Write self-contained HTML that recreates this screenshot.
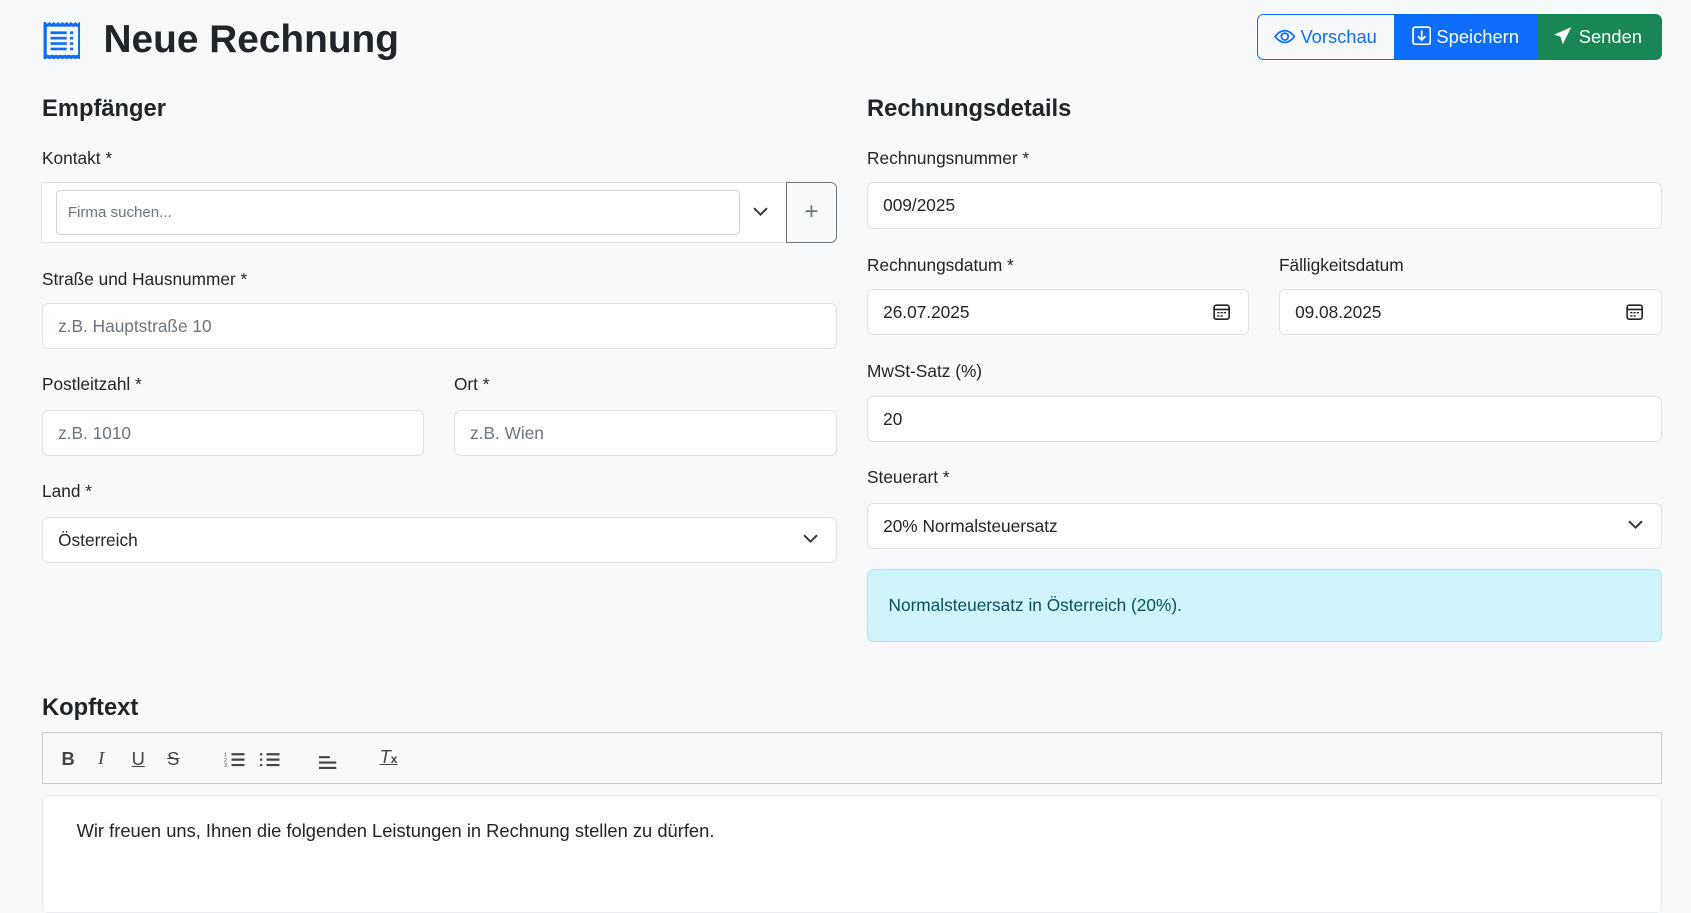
<!DOCTYPE html>
<html><head><meta charset="utf-8"><style>
*{box-sizing:border-box;margin:0;padding:0}
html,body{width:1691px;height:832px;overflow:hidden;background:#f8f9fa}
#w{position:absolute;left:0;top:0;width:1568px;height:772px;zoom:1.0784;font-family:"Liberation Sans",sans-serif;color:#212529;font-size:16px}
.a{position:absolute}
.lbl{position:absolute;font-size:16px;line-height:20px}
.inp{position:absolute;height:43px;background:#fff;border:1px solid #dee2e6;border-radius:6px;padding:0 14px;line-height:41px;font-size:16px}
.ph{color:#6c757d}
h2{position:absolute;font-size:22px;line-height:26px;font-weight:600}
.chev{position:absolute;right:16px;top:14px}
</style></head><body><div id="w">
<svg class="a" style="left:40px;top:20px" width="34" height="35" viewBox="0 0 34 35"><path d="M2 2 q2 2 4 0 q2 2 4 0 q2 2 4 0 q2 2 4 0 q2 2 4 0 q2 2 4 0 q2 2 4 0 q2 2 4 0 V33 q-2-2-4 0 q-2-2-4 0 q-2-2-4 0 q-2-2-4 0 q-2-2-4 0 q-2-2-4 0 q-2-2-4 0 q-2-2-4 0 Z" fill="none" stroke="#0d6efd" stroke-width="3"/><path d="M7 10h15M7 15h15M7 20h15M7 25h15M25 10h3M25 15h3M25 20h3M25 25h3" stroke="#0d6efd" stroke-width="2.5"/></svg>
<div class="a" style="left:96px;top:14px;font-size:36px;font-weight:600;line-height:46px">Neue Rechnung</div>
<div class="a" style="left:1166px;top:13px;width:128px;height:43px;border:1px solid #0d6efd;border-radius:6px 0 0 6px;color:#0d6efd;line-height:41px;padding-left:14px;font-size:17px"><svg width="20" height="14" viewBox="0 0 20 14" style="vertical-align:-1px;margin-right:5px"><path d="M1 7 Q10 -4 19 7 Q10 18 1 7Z" fill="none" stroke="#0d6efd" stroke-width="1.6"/><circle cx="10" cy="7" r="3.2" fill="none" stroke="#0d6efd" stroke-width="1.6"/></svg>Vorschau</div>
<div class="a" style="left:1294px;top:13px;width:132px;height:43px;background:#0d6efd;color:#fff;line-height:43px;padding-left:15px;font-size:17px"><svg width="18" height="18" viewBox="0 0 18 18" style="vertical-align:-2px;margin-right:5px"><rect x="1" y="1" width="16" height="16" rx="2" fill="none" stroke="#fff" stroke-width="1.6"/><path d="M9 4v9M5.5 9.5 9 13l3.5-3.5" fill="none" stroke="#fff" stroke-width="1.6"/></svg>Speichern</div>
<div class="a" style="left:1426px;top:13px;width:115px;height:43px;background:#198754;color:#fff;line-height:43px;padding-left:14px;font-size:17px;border-radius:0 6px 6px 0"><svg width="18" height="18" viewBox="0 0 18 18" style="vertical-align:-2px;margin-right:6px"><path d="M17 1 1 8l6 2 2 7z" fill="#fff"/></svg>Senden</div>

<h2 style="left:39px;top:88px">Empfänger</h2>
<div class="lbl" style="left:39px;top:137px">Kontakt *</div>
<div class="a" style="left:38px;top:169px;width:692px;height:56px;background:#fff;border:1px solid #dee2e6;border-right:none"></div>
<div class="inp" style="left:52px;top:176px;width:634px;height:42px;font-size:14px;line-height:40px;padding-left:10px;border-color:#ced4da;border-radius:4px"><span class="ph">Firma suchen...</span></div>
<svg class="a" style="left:698px;top:191px" width="14" height="10"><path d="M1 2l6 6 6-6" fill="none" stroke="#333" stroke-width="1.8"/></svg>
<div class="a" style="left:729px;top:169px;width:47px;height:56px;border:1px solid #6c757d;border-radius:0 6px 6px 0;background:#f8f9fa;text-align:center;line-height:54px;color:#6c757d;font-size:22px">+</div>

<div class="lbl" style="left:39px;top:249px">Straße und Hausnummer *</div>
<div class="inp" style="left:39px;top:281px;width:737px"><span class="ph">z.B. Hauptstraße 10</span></div>
<div class="lbl" style="left:39px;top:347px">Postleitzahl *</div>
<div class="lbl" style="left:421px;top:347px">Ort *</div>
<div class="inp" style="left:39px;top:380px;width:354px"><span class="ph">z.B. 1010</span></div>
<div class="inp" style="left:421px;top:380px;width:355px"><span class="ph">z.B. Wien</span></div>
<div class="lbl" style="left:39px;top:446px">Land *</div>
<div class="inp" style="left:39px;top:479px;width:737px">Österreich<svg class="chev" width="14" height="10"><path d="M1 2l6 6 6-6" fill="none" stroke="#333" stroke-width="1.8"/></svg></div>

<h2 style="left:804px;top:88px">Rechnungsdetails</h2>
<div class="lbl" style="left:804px;top:137px">Rechnungsnummer *</div>
<div class="inp" style="left:804px;top:169px;width:737px">009/2025</div>
<div class="lbl" style="left:804px;top:236px">Rechnungsdatum *</div>
<div class="lbl" style="left:1186px;top:236px">Fälligkeitsdatum</div>
<div class="inp" style="left:804px;top:268px;width:354px">26.07.2025<svg class="chev" style="top:12px" width="16" height="16"><rect x="1" y="2" width="14" height="13" rx="2" fill="none" stroke="#222" stroke-width="1.5"/><path d="M1 6h14" stroke="#222" stroke-width="1.5"/><path d="M4 9h2M7 9h2M10 9h2M4 12h2M7 12h2" stroke="#222" stroke-width="1.3"/></svg></div>
<div class="inp" style="left:1186px;top:268px;width:355px">09.08.2025<svg class="chev" style="top:12px" width="16" height="16"><rect x="1" y="2" width="14" height="13" rx="2" fill="none" stroke="#222" stroke-width="1.5"/><path d="M1 6h14" stroke="#222" stroke-width="1.5"/><path d="M4 9h2M7 9h2M10 9h2M4 12h2M7 12h2" stroke="#222" stroke-width="1.3"/></svg></div>
<div class="lbl" style="left:804px;top:335px">MwSt-Satz (%)</div>
<div class="inp" style="left:804px;top:367px;width:737px">20</div>
<div class="lbl" style="left:804px;top:433px">Steuerart *</div>
<div class="inp" style="left:804px;top:466px;width:737px">20% Normalsteuersatz<svg class="chev" width="14" height="10"><path d="M1 2l6 6 6-6" fill="none" stroke="#333" stroke-width="1.8"/></svg></div>
<div class="a" style="left:804px;top:528px;width:737px;height:67px;background:#cff4fc;border:1px solid #9eeaf9;border-radius:6px;color:#055160;padding-left:19px;line-height:65px">Normalsteuersatz in Österreich (20%).</div>

<h2 style="left:39px;top:644px">Kopftext</h2>
<div class="a" style="left:39px;top:679px;width:1502px;height:48px;border:1px solid #ccc;background:#f8f9fa"></div>
<div class="a" style="left:57px;top:694px;font-size:17px;font-weight:bold;color:#444">B</div>
<div class="a" style="left:91px;top:694px;font-size:17px;font-style:italic;color:#444;font-family:'Liberation Serif',serif">I</div>
<div class="a" style="left:122px;top:694px;font-size:17px;text-decoration:underline;color:#444">U</div>
<div class="a" style="left:155px;top:694px;font-size:17px;text-decoration:line-through;color:#444">S</div>
<svg class="a" style="left:208px;top:696px" width="20" height="16"><path d="M7 3h12M7 8h12M7 13h12" stroke="#444" stroke-width="2"/><text x="0" y="5" font-size="5" fill="#444">1</text><text x="0" y="10" font-size="5" fill="#444">2</text><text x="0" y="15" font-size="5" fill="#444">3</text></svg>
<svg class="a" style="left:240px;top:696px" width="20" height="16"><path d="M7 3h12M7 8h12M7 13h12M1 3h2M1 8h2M1 13h2" stroke="#444" stroke-width="2"/></svg>
<svg class="a" style="left:296px;top:700px" width="18" height="14"><path d="M0 2h10M0 7h16M0 12h16" stroke="#444" stroke-width="2"/></svg>
<div class="a" style="left:352px;top:692px;font-size:17px;font-style:italic;color:#444;text-decoration:underline">T<span style="font-size:11px;font-weight:bold;font-style:normal">x</span></div>
<div class="a" style="left:39px;top:737px;width:1502px;height:110px;background:#fff;border:1px solid #e9ecef;border-radius:6px"></div>
<div class="a" style="left:71px;top:760px;font-size:17px">Wir freuen uns, Ihnen die folgenden Leistungen in Rechnung stellen zu dürfen.</div>
</div></body></html>
